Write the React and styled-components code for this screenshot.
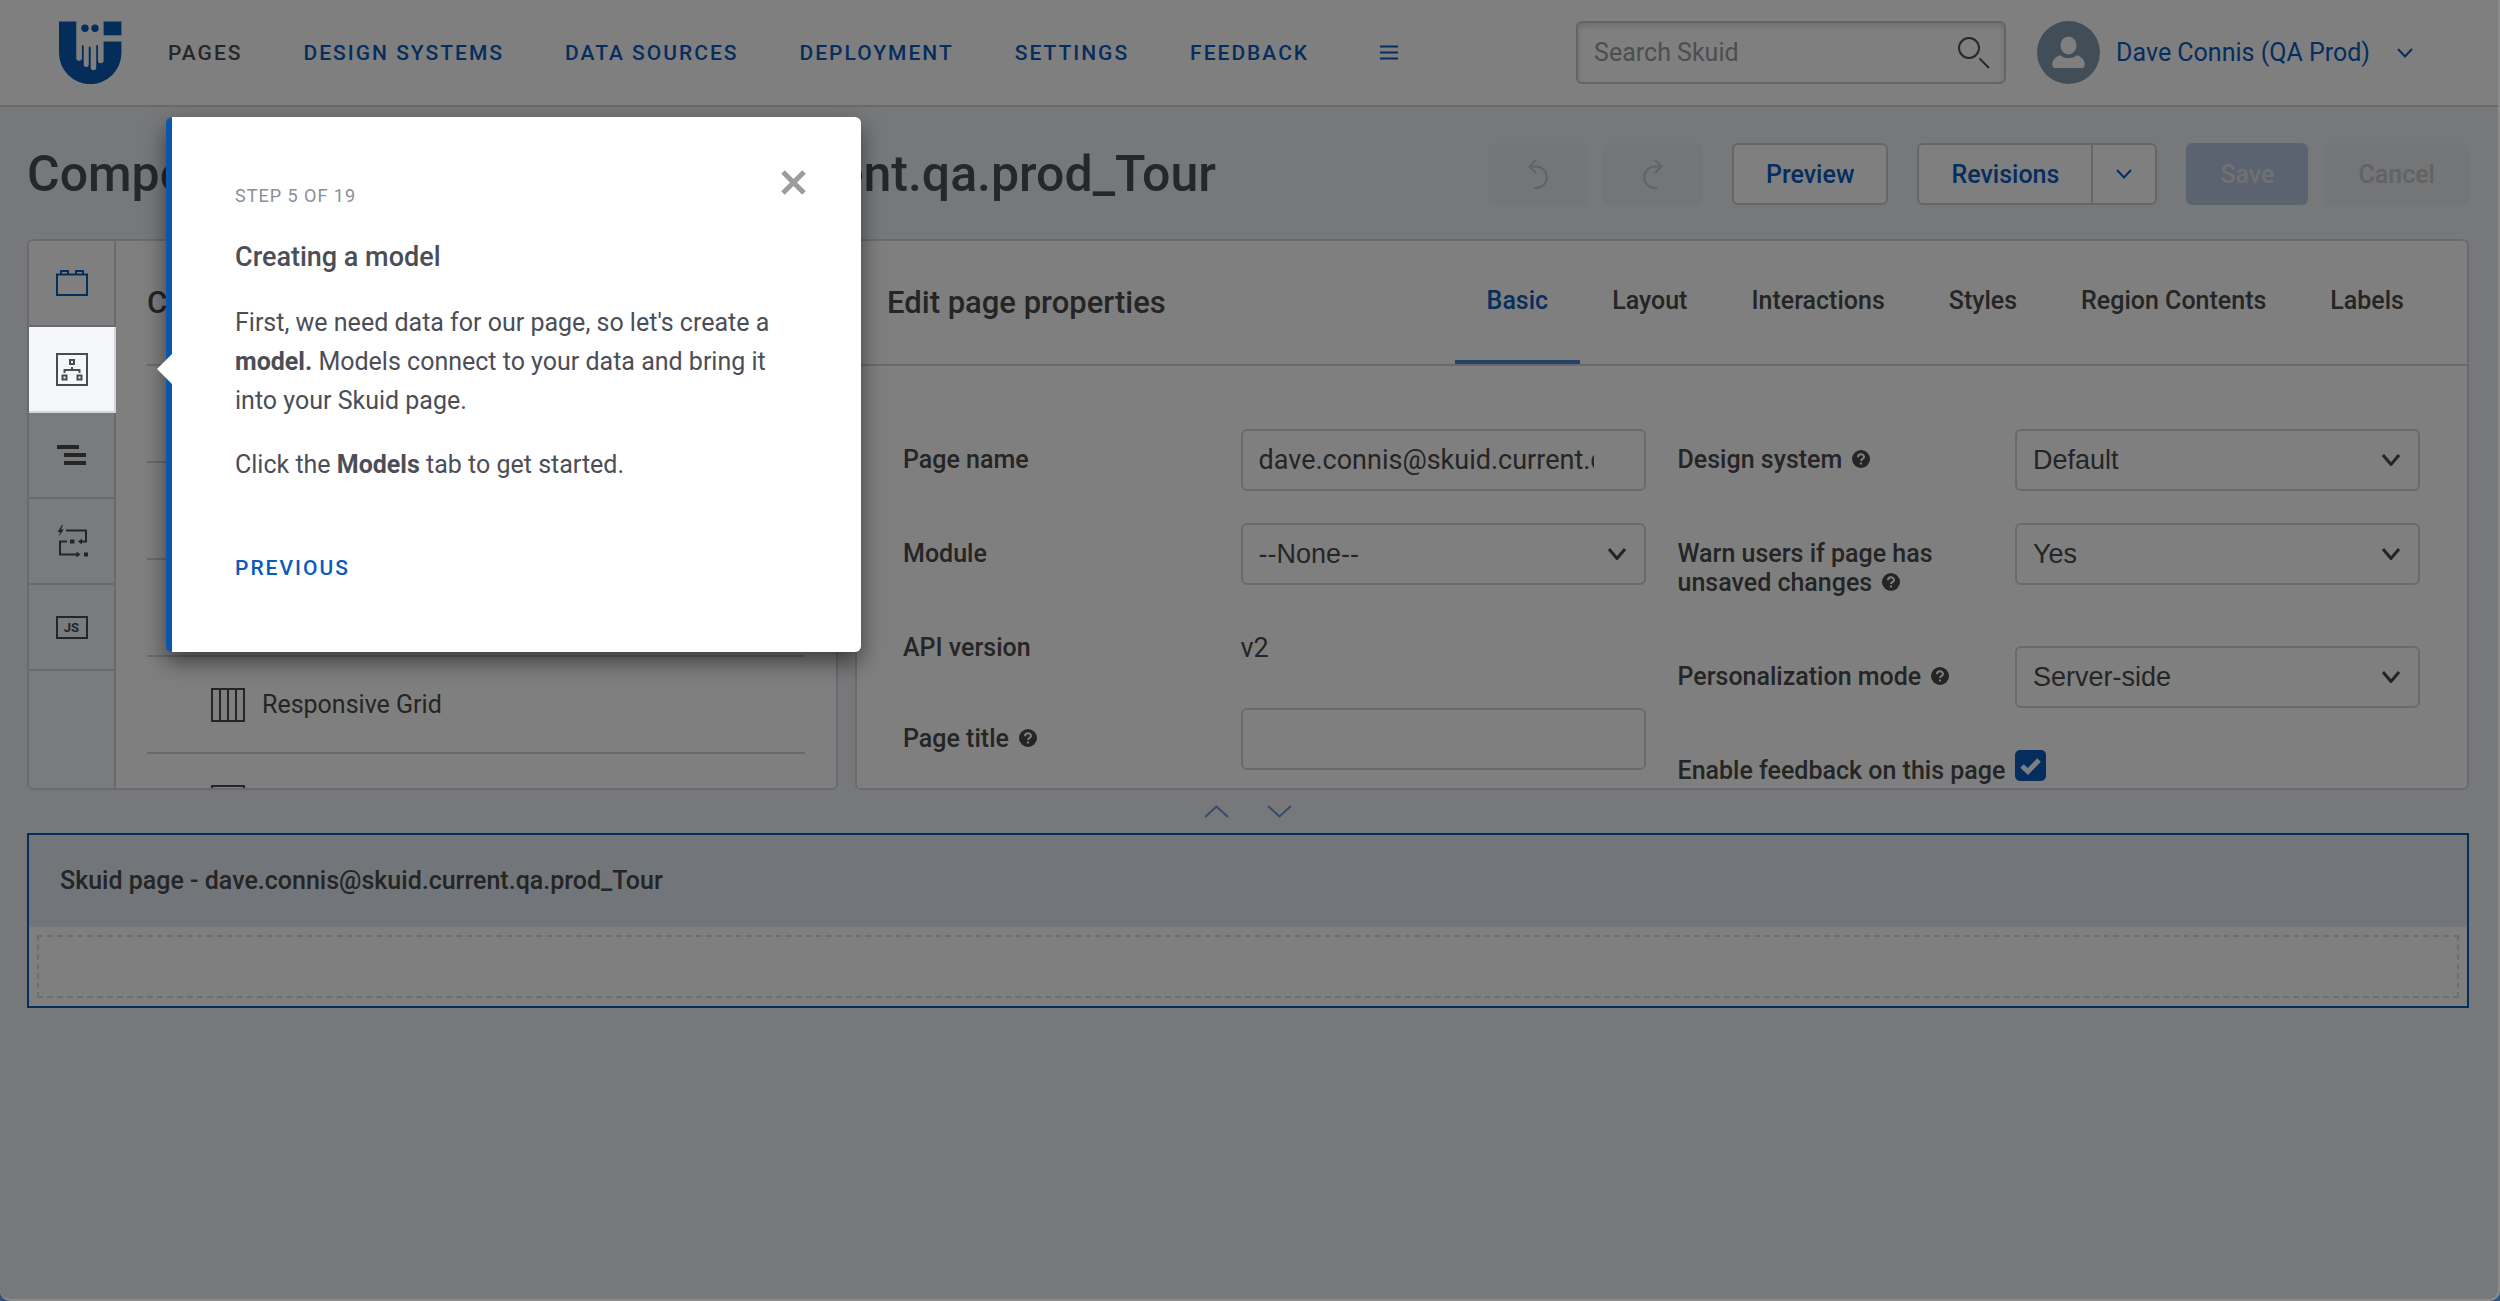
import React from "react"
import styled, { createGlobalStyle } from "styled-components"

const GlobalStyle = createGlobalStyle`
  :root {
    --blue: #0b5bbc;
    --ink: #4a4b4c;
    --slate: #4c4e57;
    --line: #d4d5dc;
    --page: #eef0f3;
  }
  * {
    box-sizing: border-box;
  }
  body {
    margin: 0;
    background: #33507f;
    color: var(--ink);
    font-family: Roboto, "Liberation Sans", sans-serif;
    font-size: 25px;
  }
  button,
  input,
  select {
    font: inherit;
    color: inherit;
    margin: 0;
  }
  button {
    cursor: pointer;
  }
  a {
    color: var(--blue);
    text-decoration: none;
  }
  svg {
    display: block;
    fill: none;
    stroke: currentColor;
    stroke-width: 2;
  }
`

const Window = styled.div`
  position: relative;
  min-height: 100vh;
  background: var(--page);
  border: 2px solid #8b8b8b;
  border-width: 0 2px 2px 0;
  border-radius: 0 0 10px 10px;
  overflow: hidden;
`

const Backdrop = styled.div`
  position: absolute;
  inset: 0;
  z-index: 10;
  background: rgba(0, 0, 0, 0.5);
`

/* ---------- header ---------- */

const Header = styled.header`
  display: flex;
  align-items: center;
  justify-content: space-between;
  padding: 21px 85px 21px 59px;
  background: #fff;
  border-bottom: 2px solid var(--line);
`

const HeaderGroup = styled.div`
  display: flex;
  align-items: center;
  gap: ${(p) => p.$gap}px;
`

const Nav = styled.nav`
  display: flex;
  align-items: center;
  gap: 61px;
`

const NavLink = styled.a`
  font-size: 21px;
  line-height: 24px;
  font-weight: 500;
  letter-spacing: 2px;
  color: ${(p) => (p.$active ? "var(--slate)" : "var(--blue)")};
`

const MenuButton = styled.button`
  padding: 0 10px;
  border: 0;
  background: none;
  color: var(--blue);
`

const SearchBox = styled.div`
  display: flex;
  align-items: center;
  width: 430px;
  height: 63px;
  padding: 0 14px 0 16px;
  background: #fff;
  border: 2px solid #c9cacc;
  border-radius: 6px;
  box-shadow: inset 0 3px 6px rgba(0, 0, 0, 0.14);
  color: #4f5058;
  input {
    flex: 1;
    min-width: 0;
    padding: 0;
    border: 0;
    outline: 0;
    background: none;
    &::placeholder {
      color: #9b9ca0;
      opacity: 1;
    }
  }
`

const UserButton = styled.button`
  display: flex;
  align-items: center;
  padding: 0;
  border: 0;
  background: none;
  color: var(--blue);
  .__name {
    margin: 0 27px 0 16px;
  }
`

/* ---------- page title and actions ---------- */

const Toolbar = styled.div`
  display: flex;
  align-items: center;
  justify-content: space-between;
  padding: 36px 29px 34px 27px;
`

const PageTitle = styled.h1`
  margin: 0;
  font-size: 50px;
  line-height: 58px;
  font-weight: 500;
  color: var(--slate);
  white-space: nowrap;
`

const Actions = styled.div`
  display: flex;
  gap: 29px;
`

const ActionPair = styled.div`
  display: flex;
  gap: ${(p) => p.$gap || 0}px;
`

const Button = styled.button`
  display: flex;
  align-items: center;
  justify-content: center;
  height: 62px;
  min-width: ${(p) => p.$width || 0}px;
  padding: 0 32px;
  font-weight: 500;
  color: var(--blue);
  background: #fff;
  border: 2px solid #cbcdd2;
  border-radius: 6px;
  &:disabled {
    cursor: default;
    color: ${(p) => (p.$primary ? "#e0e2e6" : "#c5c6c8")};
    background: ${(p) => (p.$primary ? "#b4c7de" : "#e9eaec")};
    border-color: transparent;
  }
`

const SplitMain = styled(Button)`
  border-radius: 6px 0 0 6px;
`

const SplitCaret = styled(Button)`
  padding: 0 23px;
  border-left: 0;
  border-radius: 0 6px 6px 0;
`

/* ---------- builder panels ---------- */

const Builder = styled.main`
  padding: 0 29px 0 27px;
`

const Panels = styled.div`
  display: grid;
  grid-template-columns: minmax(0, 1fr) minmax(0, 1.99fr);
  gap: 17px;
  height: 551px;
`

const Panel = styled.section`
  display: flex;
  background: #fff;
  border: 2px solid var(--line);
  border-radius: 6px;
  overflow: hidden;
`

const Rail = styled.div`
  display: flex;
  flex-direction: column;
  flex: none;
  width: 87px;
  background: #f4f6f9;
  border-right: 2px solid var(--line);
`

const RailTab = styled.button`
  display: grid;
  place-items: center;
  height: 86px;
  padding: 0;
  border: 0;
  border-bottom: 2px solid var(--line);
  background: ${(p) => (p.$active ? "#fff" : "#f4f6f9")};
  color: ${(p) => (p.$active ? "var(--blue)" : "var(--ink)")};
  ${(p) =>
    p.$spotlight &&
    `
    position: relative;
    z-index: 11;
    margin-right: -2px;
    border-right: 2px solid var(--line);
  `}
`

const Library = styled.div`
  flex: 1;
  padding: 0 31px;
`

const PanelHeader = styled.div`
  display: flex;
  align-items: center;
  justify-content: space-between;
  height: 125px;
  padding: 0 31px 0 ${(p) => (p.$inset ? 30 : 0)}px;
  border-bottom: 2px solid var(--line);
`

const PanelTitle = styled.h2`
  margin: 0;
  font-size: 31px;
  font-weight: 500;
`

const ComponentRow = styled.div`
  display: flex;
  align-items: center;
  gap: 17px;
  height: 97px;
  padding-left: 64px;
  border-bottom: 2px solid var(--line);
`

const Properties = styled.div`
  flex: 1;
`

const Tabs = styled.div`
  display: flex;
  align-self: stretch;
`

const Tab = styled.button`
  padding: 0 32px;
  border: 0;
  border-bottom: 4px solid ${(p) => (p.$active ? "#4788d0" : "transparent")};
  background: none;
  font-weight: 500;
  color: ${(p) => (p.$active ? "var(--blue)" : "inherit")};
`

const Form = styled.form`
  display: grid;
  grid-template-columns: 1fr 1fr;
  gap: 32px;
  padding: 63px 47px 0 46px;
`

const Column = styled.div`
  display: flex;
  flex-direction: column;
  gap: 32px;
`

const FieldRow = styled.div`
  display: grid;
  grid-template-columns: 5fr 6fr;
  align-items: start;
`

const StaticRow = styled(FieldRow)`
  height: 59px;
`

const Label = styled.label`
  padding: 16px ${(p) => (p.$tight ? 0 : 40)}px 17px 0;
  line-height: 29px;
  font-weight: 500;
  white-space: ${(p) => (p.$tight ? "nowrap" : "normal")};
  svg {
    display: inline-block;
    margin-left: 4px;
  }
`

const Control = styled.div`
  display: grid;
  align-items: center;
  > * {
    grid-area: 1 / 1;
  }
  svg {
    justify-self: end;
    margin-right: 20px;
    pointer-events: none;
  }
`

const TextInput = styled.input`
  width: 100%;
  height: 62px;
  padding: 0 50px 0 16px;
  background: #fff;
  border: 2px solid var(--line);
  border-radius: 6px;
  font-size: 27px;
`

const Select = styled.select`
  width: 100%;
  height: 62px;
  padding: 0 48px 0 16px;
  appearance: none;
  background: #fff;
  border: 2px solid var(--line);
  border-radius: 6px;
  font-family: "Liberation Sans", Arial, sans-serif;
  font-size: 27px;
`

const StaticValue = styled.output`
  font-size: 27px;
  line-height: 30px;
  padding-top: 16px;
`

const CheckControl = styled.div`
  display: grid;
  width: 31px;
  margin-top: 10px;
  place-items: center;
  > * {
    grid-area: 1 / 1;
  }
  svg {
    color: #fff;
    pointer-events: none;
  }
`

const CheckInput = styled.input`
  appearance: none;
  width: 31px;
  height: 31px;
  background: var(--blue);
  border-radius: 5px;
`

const Splitter = styled.div`
  display: flex;
  justify-content: center;
  align-items: center;
  gap: 38px;
  height: 43px;
  color: #6a97d2;
  button {
    padding: 0;
    border: 0;
    background: none;
    color: inherit;
  }
`

/* ---------- canvas ---------- */

const Canvas = styled.section`
  background: #fff;
  border: 2px solid var(--blue);
`

const CanvasTitle = styled.h3`
  margin: 0;
  padding: 31px;
  font-size: 25px;
  line-height: 30px;
  font-weight: 500;
  background: #e4eaf3;
`

const DropZone = styled.div`
  height: 63px;
  margin: 8px;
  border: 2px dashed #dcdcdc;
`

/* ---------- tour ---------- */

const TourCard = styled.aside`
  position: absolute;
  z-index: 12;
  top: 117px;
  left: 166px;
  width: 695px;
  padding: 62px 55px 69px 63px;
  background: #fff;
  border-left: 6px solid #0c56ac;
  border-radius: 6px;
  box-shadow: 0 10px 22px rgba(0, 0, 0, 0.5);
  color: var(--slate);
  &::before {
    content: "";
    position: absolute;
    left: -15px;
    top: 237px;
    border: solid transparent;
    border-width: 15px 15px 15px 0;
    border-right-color: #fff;
  }
`

const TourTop = styled.div`
  display: flex;
  align-items: flex-start;
  justify-content: space-between;
`

const TourStep = styled.div`
  margin-top: 5px;
  font-size: 18px;
  line-height: 24px;
  letter-spacing: 1px;
  color: #8b8e97;
`

const TourClose = styled.button`
  margin-top: -9px;
  padding: 0;
  border: 0;
  background: none;
  color: #9c9c9c;
`

const TourTitle = styled.h4`
  margin: 30px 0 26px;
  font-size: 27px;
  line-height: 39px;
  font-weight: 500;
`

const TourText = styled.p`
  margin: 0 0 25px;
  line-height: 39px;
`

const TourPrevious = styled.button`
  display: block;
  margin-top: 69px;
  padding: 0;
  border: 0;
  background: none;
  font-size: 21px;
  line-height: 30px;
  font-weight: 500;
  letter-spacing: 2px;
  color: var(--blue);
`

/* ---------- icons ---------- */

const Logo = () => (
  <svg width="63" height="63" viewBox="0 0 63 63" role="img" aria-label="Skuid">
    <g fill="#0b5bb3" stroke="none">
      <path d="M0 .5H17.3V37a2.8 2.8 0 0 0 5.6 0V25a.9.9 0 0 1 1.8 0V43.5a2.5 2.5 0 0 0 5 0V26.5a1 1 0 0 1 2 0V46.5a2.75 2.75 0 0 0 5.5 0V25a.9.9 0 0 1 1.8 0V39.5a2.8 2.8 0 0 0 5.6 0V20.5H62.4V32a31.2 31.2 0 0 1-62.4 0Z" />
      <path d="M44.6.5H62.4V14.3H44.6Z" />
      <circle cx="26" cy="7.3" r="3.7" />
      <circle cx="36" cy="7.3" r="3.7" />
    </g>
  </svg>
)

const MenuIcon = () => (
  <svg width="18" height="15" viewBox="0 0 18 15">
    <path d="M0 1.5H18M0 7.5H18M0 13.5H18" />
  </svg>
)

const SearchIcon = () => (
  <svg width="32" height="32" viewBox="0 0 32 32">
    <circle cx="11" cy="11" r="10" />
    <path d="M21.5 21.5L31 31" />
  </svg>
)

const Avatar = () => (
  <svg width="63" height="63" viewBox="0 0 63 63">
    <g stroke="none">
      <circle cx="31.5" cy="31.5" r="31.5" fill="#839caf" />
      <ellipse cx="31.5" cy="24.5" rx="8" ry="9" fill="#fff" />
      <path
        fill="#fff"
        d="M23 34.2c2.6 2 5.4 2.8 8.5 2.8s5.9-.8 8.5-2.8c4.5 1.3 7.8 5 7.8 9.5 0 2-1.3 3.3-3.3 3.3H18.5c-2 0-3.3-1.3-3.3-3.3 0-4.5 3.3-8.2 7.8-9.5Z"
      />
    </g>
  </svg>
)

const ChevronSvg = styled.svg`
  stroke-width: ${(p) => p.$weight};
`

const Chevron = ({ width = 16, height = 10, weight = 2, up }) => (
  <ChevronSvg $weight={weight} width={width} height={height} viewBox={`0 0 ${width} ${height}`}>
    <path
      d={
        up
          ? `M1 ${height - 1}L${width / 2} 1.5L${width - 1} ${height - 1}`
          : `M1 1L${width / 2} ${height - 1.5}L${width - 1} 1`
      }
    />
  </ChevronSvg>
)

const UndoIcon = () => (
  <svg width="20" height="31" viewBox="0 0 20 31">
    <path d="M8 1L1.5 7.5L8 14M1.5 7.5H8a10.8 10.8 0 0 1 0 21.6H6" />
  </svg>
)

const RedoIcon = () => (
  <svg width="20" height="31" viewBox="0 0 20 31">
    <path d="M12 1L18.5 7.5L12 14M18.5 7.5H12a10.8 10.8 0 0 0 0 21.6H14" />
  </svg>
)

const BrickIcon = () => (
  <svg width="32" height="26" viewBox="0 0 32 26">
    <path d="M1 4.5H31V25H1ZM5 4V1H12V4M20 4V1H27V4" />
  </svg>
)

const ModelIcon = () => (
  <svg width="32" height="33" viewBox="0 0 32 33">
    <path d="M1 1H31V32H1ZM14 7H18V11H14ZM6.5 22.5H10.5V26.5H6.5ZM21.5 22.5H25.5V26.5H21.5ZM8.5 20V17H23.5V20M16 17V14" />
  </svg>
)

const LinesIcon = () => (
  <svg width="32" height="20" viewBox="0 0 32 20">
    <path fill="currentColor" stroke="none" d="M1 0H23V4H1ZM8 8H30V12H8ZM8 16H30V20H8Z" />
  </svg>
)

const FlowIcon = () => (
  <svg width="32" height="32" viewBox="0 0 32 32">
    <path d="M10 5.5H30V16.500H25M11 16.5H4V29.5H22" />
    <path
      fill="currentColor"
      stroke="none"
      d="M6 0L1.5 7H4.2L2.5 11.5L8 4.5H5.2L7 0ZM14 14.5H18.5V18.5H14ZM28 27.5H32V31.5H28ZM22 16.5L26 13.5V19.5ZM24.5 29.5L20.5 26.5V32.5Z"
    />
  </svg>
)

const ScriptIcon = styled.span`
  display: grid;
  place-items: center;
  width: 32px;
  height: 23px;
  border: 2px solid currentColor;
  font-size: 13px;
  line-height: 13px;
  font-weight: 700;
  &::before {
    content: "JS";
  }
`

const GridIcon = () => (
  <svg width="34" height="34" viewBox="0 0 34 34">
    <path d="M1 1H33V33H1ZM9 1V33M17 1V33M25 1V33" />
  </svg>
)

const BoxIcon = () => (
  <svg width="34" height="34" viewBox="0 0 34 34">
    <path d="M1 1H33V33H1Z" />
  </svg>
)

const HelpIcon = () => (
  <svg width="18" height="18" viewBox="0 0 18 18">
    <circle cx="9" cy="9" r="9" fill="currentColor" stroke="none" />
    <path stroke="#fff" d="M6 7.2C6 3.4 12 3.4 12 7C12 9 9 8.8 9 11M9 12.5V14.5" />
  </svg>
)

const HeavySvg = styled.svg`
  stroke-width: 5;
`

const CheckIcon = () => (
  <HeavySvg width="21" height="18" viewBox="0 0 21 18">
    <path d="M2 9L8 14.5L19 3" />
  </HeavySvg>
)

const CloseIcon = () => (
  <HeavySvg width="25" height="25" viewBox="0 0 25 25">
    <path d="M2 2L23 23M23 2L2 23" />
  </HeavySvg>
)

/* ---------- data ---------- */

const NAV = ["PAGES", "DESIGN SYSTEMS", "DATA SOURCES", "DEPLOYMENT", "SETTINGS", "FEEDBACK"]

const RAIL = [
  { name: "Components", Icon: BrickIcon, active: true },
  { name: "Models", Icon: ModelIcon, spotlight: true },
  { name: "Outline", Icon: LinesIcon },
  { name: "Action flows", Icon: FlowIcon },
  { name: "JavaScript", Icon: ScriptIcon },
]

const COMPONENTS = [
  { id: 1, Icon: BoxIcon },
  { id: 2, Icon: BoxIcon },
  { id: 3, Icon: BoxIcon },
  { id: 4, Icon: GridIcon, name: "Responsive Grid" },
  { id: 5, Icon: BoxIcon },
]

const TABS = ["Basic", "Layout", "Interactions", "Styles", "Region Contents", "Labels"]

const PAGE = "dave.connis@skuid.current.qa.prod_Tour"

function SelectField({ id, label, value, help }) {
  return (
    <FieldRow>
      <Label htmlFor={id}>
        {label} {help && <HelpIcon />}
      </Label>
      <Control>
        <Select id={id} defaultValue={value}>
          <option>{value}</option>
        </Select>
        <Chevron width={18} height={12} weight={3} />
      </Control>
    </FieldRow>
  )
}

function TextField({ id, label, value, help }) {
  return (
    <FieldRow>
      <Label htmlFor={id}>
        {label} {help && <HelpIcon />}
      </Label>
      <TextInput id={id} type="text" defaultValue={value} />
    </FieldRow>
  )
}

function SiteHeader() {
  return (
    <Header>
      <HeaderGroup $gap={46}>
        <Logo />
        <Nav>
          {NAV.map((item, i) => (
            <NavLink key={item} href="#" $active={i === 0}>
              {item}
            </NavLink>
          ))}
          <MenuButton aria-label="More">
            <MenuIcon />
          </MenuButton>
        </Nav>
      </HeaderGroup>
      <HeaderGroup $gap={31}>
        <SearchBox>
          <input type="search" placeholder="Search Skuid" aria-label="Search Skuid" />
          <SearchIcon />
        </SearchBox>
        <UserButton>
          <Avatar />
          <span className="__name">Dave Connis (QA Prod)</span>
          <Chevron />
        </UserButton>
      </HeaderGroup>
    </Header>
  )
}

function PageToolbar() {
  return (
    <Toolbar>
      <PageTitle>Composer - {PAGE}</PageTitle>
      <Actions>
        <ActionPair $gap={15}>
          <Button disabled $width={100} aria-label="Undo">
            <UndoIcon />
          </Button>
          <Button disabled $width={100} aria-label="Redo">
            <RedoIcon />
          </Button>
        </ActionPair>
        <Button>Preview</Button>
        <ActionPair>
          <SplitMain>Revisions</SplitMain>
          <SplitCaret aria-label="Revision options">
            <Chevron />
          </SplitCaret>
        </ActionPair>
        <ActionPair $gap={16}>
          <Button disabled $primary>
            Save
          </Button>
          <Button disabled>Cancel</Button>
        </ActionPair>
      </Actions>
    </Toolbar>
  )
}

function ComponentPanel() {
  return (
    <Panel>
      <Rail>
        {RAIL.map(({ name, Icon, active, spotlight }) => (
          <RailTab key={name} aria-label={name} $active={active} $spotlight={spotlight}>
            <Icon />
          </RailTab>
        ))}
      </Rail>
      <Library>
        <PanelHeader>
          <PanelTitle>Components</PanelTitle>
        </PanelHeader>
        {COMPONENTS.map(({ id, name, Icon }) => (
          <ComponentRow key={id}>
            <Icon />
            {name}
          </ComponentRow>
        ))}
      </Library>
    </Panel>
  )
}

function PropertiesPanel() {
  return (
    <Panel>
      <Properties>
        <PanelHeader $inset>
          <PanelTitle>Edit page properties</PanelTitle>
          <Tabs>
            {TABS.map((tab, i) => (
              <Tab key={tab} $active={i === 0}>
                {tab}
              </Tab>
            ))}
          </Tabs>
        </PanelHeader>
        <Form>
          <Column>
            <TextField id="page-name" label="Page name" value={PAGE} />
            <SelectField id="module" label="Module" value="--None--" />
            <StaticRow>
              <Label htmlFor="api-version">API version</Label>
              <StaticValue id="api-version">v2</StaticValue>
            </StaticRow>
            <TextField id="page-title" label="Page title" value="" help />
          </Column>
          <Column>
            <SelectField id="design-system" label="Design system" value="Default" help />
            <SelectField id="warn" label="Warn users if page has unsaved changes" value="Yes" help />
            <SelectField id="personalization" label="Personalization mode" value="Server-side" help />
            <FieldRow>
              <Label htmlFor="feedback" $tight>
                Enable feedback on this page
              </Label>
              <CheckControl>
                <CheckInput id="feedback" type="checkbox" defaultChecked />
                <CheckIcon />
              </CheckControl>
            </FieldRow>
          </Column>
        </Form>
      </Properties>
    </Panel>
  )
}

function Tour() {
  return (
    <TourCard>
      <TourTop>
        <TourStep>STEP 5 OF 19</TourStep>
        <TourClose aria-label="Close tour">
          <CloseIcon />
        </TourClose>
      </TourTop>
      <TourTitle>Creating a model</TourTitle>
      <TourText>
        First, we need data for our page, so let's create a <b>model.</b> Models connect to your data and bring it into
        your Skuid page.
      </TourText>
      <TourText>
        Click the <b>Models</b> tab to get started.
      </TourText>
      <TourPrevious>PREVIOUS</TourPrevious>
    </TourCard>
  )
}

export default function App() {
  return (
    <Window>
      <GlobalStyle />
      <SiteHeader />
      <PageToolbar />
      <Builder>
        <Panels>
          <ComponentPanel />
          <PropertiesPanel />
        </Panels>
        <Splitter>
          <button aria-label="Collapse panels">
            <Chevron width={25} height={13} up />
          </button>
          <button aria-label="Expand panels">
            <Chevron width={25} height={13} />
          </button>
        </Splitter>
        <Canvas>
          <CanvasTitle>Skuid page - {PAGE}</CanvasTitle>
          <DropZone />
        </Canvas>
      </Builder>
      <Backdrop />
      <Tour />
    </Window>
  )
}
